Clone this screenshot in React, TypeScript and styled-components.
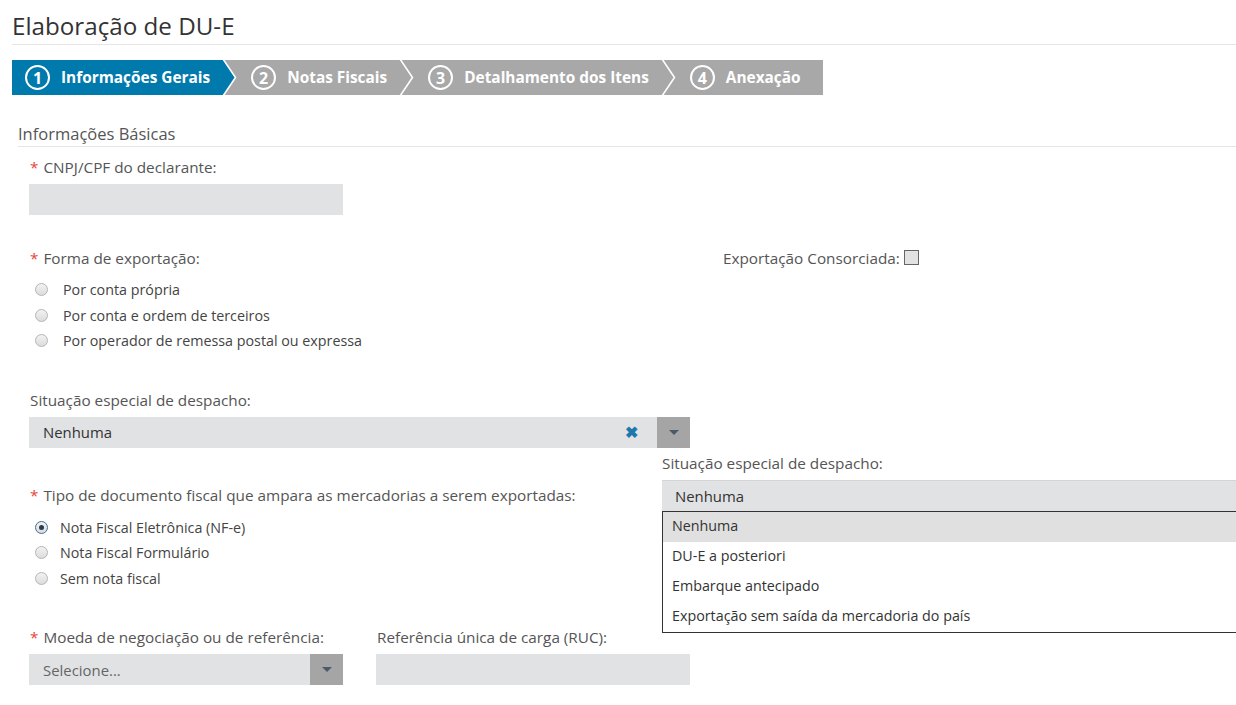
import styled, { createGlobalStyle } from "styled-components"

const GlobalStyle = createGlobalStyle`
  body {
    margin: 0;
    background: #fff;
    font-family: "Open Sans", "Liberation Sans", sans-serif;
    color: #555;
  }
`

const Page = styled.div`
  position: relative;
  width: 1236px;
  height: 705px;
  overflow: hidden;
`

const Header = styled.h1`
  margin: 0 0 0 12px;
  padding: 9px 0 2px;
  font-size: 24.2px;
  line-height: 33px;
  font-weight: 400;
  color: #333;
  border-bottom: 1px solid #e5e5e5;
`

const StepBar = styled.div`
  display: flex;
  align-items: stretch;
  width: 811px;
  height: 35px;
  margin: 15px 0 0 12px;
  background: #a8a8a8;
`

const Step = styled.div<{ $active?: boolean; $first?: boolean }>`
  display: flex;
  align-items: center;
  gap: 11px;
  padding: 0 12px 0 ${p => (p.$first ? "13px" : "14px")};
  background: ${p => (p.$active ? "#0079ad" : "transparent")};
  color: #fff;
  font-weight: 700;
  font-size: 15.4px;
  white-space: nowrap;
`

const StepNum = styled.span`
  display: flex;
  align-items: center;
  justify-content: center;
  width: 21px;
  height: 21px;
  border: 2px solid #fff;
  border-radius: 50%;
  font-size: 16px;
  line-height: 1;
`

const SectionTitle = styled.h2`
  margin: 28px 0 0 18px;
  padding: 0 0 1px;
  font-size: 16.5px;
  line-height: 22px;
  font-weight: 400;
  color: #555;
  border-bottom: 1px solid #e5e5e5;
`

const Form = styled.div`
  padding-left: 29px;
`

const Field = styled.div<{ $top: number }>`
  margin-top: ${p => p.$top}px;
`

const Label = styled.div<{ $gap?: number }>`
  padding-left: 1px;
  font-size: 15.3px;
  line-height: 20px;
  color: #555;
  margin-bottom: ${p => (p.$gap ?? 7)}px;
`

const Req = styled.span`
  color: #e5453a;
  margin-right: 5px;
`

const Input = styled.div<{ $w: number }>`
  width: ${p => p.$w}px;
  height: 31px;
  background: #e1e2e4;
`

const Row = styled.div`
  display: flex;
  align-items: flex-start;
`

const LeftCol = styled.div`
  width: 694px;
`

const Inline = styled.div`
  display: flex;
  align-items: center;
  gap: 4px;
  font-size: 15.3px;
  line-height: 20px;
  color: #555;
`

const Check = styled.span`
  width: 13px;
  height: 13px;
  border: 1px solid #666;
  background: #e2e2e2;
  margin-top: -2px;
`

const RadioList = styled.div<{ $top: number }>`
  margin-top: ${p => p.$top}px;
  padding-left: 6px;
`

const RadioRow = styled.div<{ $gap: number }>`
  display: flex;
  align-items: center;
  gap: ${p => p.$gap}px;
  height: 25.5px;
  font-size: 14.3px;
  color: #444;
`

const Radio = styled.span<{ $on?: boolean }>`
  position: relative;
  box-sizing: border-box;
  width: 13px;
  height: 13px;
  border-radius: 50%;
  border: 1px solid ${p => (p.$on ? "#3d6f9e" : "#b5b5b5")};
  background: linear-gradient(#f2f2f2, #dcdcdc);
  &::after {
    content: "";
    display: ${p => (p.$on ? "block" : "none")};
    position: absolute;
    left: 3px;
    top: 3px;
    width: 5px;
    height: 5px;
    border-radius: 50%;
    background: #2f3b4a;
  }
`

const Select = styled.div<{ $w: number }>`
  display: flex;
  align-items: center;
  width: ${p => p.$w}px;
  height: 31px;
  background: #e1e2e4;
  font-size: 14.9px;
`

const SelectText = styled.span<{ $muted?: boolean }>`
  flex: 1;
  padding-left: 14px;
  color: ${p => (p.$muted ? "#666" : "#333")};
`

const Clear = styled.span`
  color: #1e78ad;
  font-weight: 700;
  font-size: 16px;
  margin-right: 19px;
`

const Arrow = styled.span`
  display: flex;
  align-items: center;
  justify-content: center;
  width: 33px;
  height: 100%;
  background: #a5a5a5;
  &::after {
    content: "";
    border-left: 5px solid transparent;
    border-right: 5px solid transparent;
    border-top: 5px solid #4b5a6b;
  }
`

const Pair = styled.div`
  display: flex;
  gap: 33px;
`

const Overlay = styled.div`
  position: absolute;
  left: 662px;
  top: 453px;
  width: 590px;
  background: #fff;
`

const OverlayLabel = styled.div`
  font-size: 15.3px;
  line-height: 20px;
  color: #555;
  margin-bottom: 7px;
`

const OverlaySelect = styled.div`
  height: 30px;
  line-height: 30px;
  padding-left: 13px;
  background: #e1e2e4;
  border-top: 1px solid #d4d4d4;
  font-size: 14.9px;
  color: #333;
`

const Menu = styled.div`
  border: 1px solid #333;
  background: #fff;
`

const MenuItem = styled.div<{ $hl?: boolean }>`
  height: 30px;
  line-height: 28px;
  padding-left: 9px;
  font-size: 14.3px;
  color: #333;
  background: ${p => (p.$hl ? "#e0e0e0" : "#fff")};
`

const Chevron = ({ active }: { active?: boolean }) => (
  <svg width="15" height="35" viewBox="0 0 15 35" style={{ display: "block", flex: "none" }}>
    {active && <polygon points="0,0 1.5,0 13.5,17.5 1.5,35 0,35" fill="#0079ad" />}
    <polyline points="1,-1 13.5,17.5 1,36" fill="none" stroke="#fff" strokeWidth="1.6" />
  </svg>
)

const steps = ["Informações Gerais", "Notas Fiscais", "Detalhamento dos Itens", "Anexação"]

export default function App() {
  return (
    <Page>
      <GlobalStyle />
      <Header>Elaboração de DU-E</Header>
      <StepBar>
        {steps.map((s, i) => (
          <div key={s} style={{ display: "contents" }}>
            <Step $active={i === 0} $first={i === 0}>
              <StepNum>{i + 1}</StepNum>
              {s}
            </Step>
            {i < steps.length - 1 && <Chevron active={i === 0} />}
          </div>
        ))}
      </StepBar>
      <SectionTitle>Informações Básicas</SectionTitle>
      <Form>
        <Field $top={10}>
          <Label><Req>*</Req>CNPJ/CPF do declarante:</Label>
          <Input $w={314} />
        </Field>
        <Field $top={33}>
          <Row>
            <LeftCol>
              <Label $gap={0}><Req>*</Req>Forma de exportação:</Label>
              <RadioList $top={9}>
                <RadioRow $gap={15}><Radio />Por conta própria</RadioRow>
                <RadioRow $gap={15}><Radio />Por conta e ordem de terceiros</RadioRow>
                <RadioRow $gap={15}><Radio />Por operador de remessa postal ou expressa</RadioRow>
              </RadioList>
            </LeftCol>
            <Inline>Exportação Consorciada: <Check /></Inline>
          </Row>
        </Field>
        <Field $top={36}>
          <Label>Situação especial de despacho:</Label>
          <Select $w={661}>
            <SelectText>Nenhuma</SelectText>
            <Clear>✖</Clear>
            <Arrow />
          </Select>
        </Field>
        <Field $top={37}>
          <Label $gap={0}><Req>*</Req>Tipo de documento fiscal que ampara as mercadorias a serem exportadas:</Label>
          <RadioList $top={10}>
            <RadioRow $gap={12}><Radio $on />Nota Fiscal Eletrônica (NF-e)</RadioRow>
            <RadioRow $gap={12}><Radio />Nota Fiscal Formulário</RadioRow>
            <RadioRow $gap={12}><Radio />Sem nota fiscal</RadioRow>
          </RadioList>
        </Field>
        <Field $top={36}>
          <Pair>
            <div>
              <Label><Req>*</Req>Moeda de negociação ou de referência:</Label>
              <Select $w={314}>
                <SelectText $muted>Selecione...</SelectText>
                <Arrow />
              </Select>
            </div>
            <div>
              <Label>Referência única de carga (RUC):</Label>
              <Input $w={314} />
            </div>
          </Pair>
        </Field>
      </Form>
      <Overlay>
        <OverlayLabel>Situação especial de despacho:</OverlayLabel>
        <OverlaySelect>Nenhuma</OverlaySelect>
        <Menu>
          <MenuItem $hl>Nenhuma</MenuItem>
          <MenuItem>DU-E a posteriori</MenuItem>
          <MenuItem>Embarque antecipado</MenuItem>
          <MenuItem>Exportação sem saída da mercadoria do país</MenuItem>
        </Menu>
      </Overlay>
    </Page>
  )
}
